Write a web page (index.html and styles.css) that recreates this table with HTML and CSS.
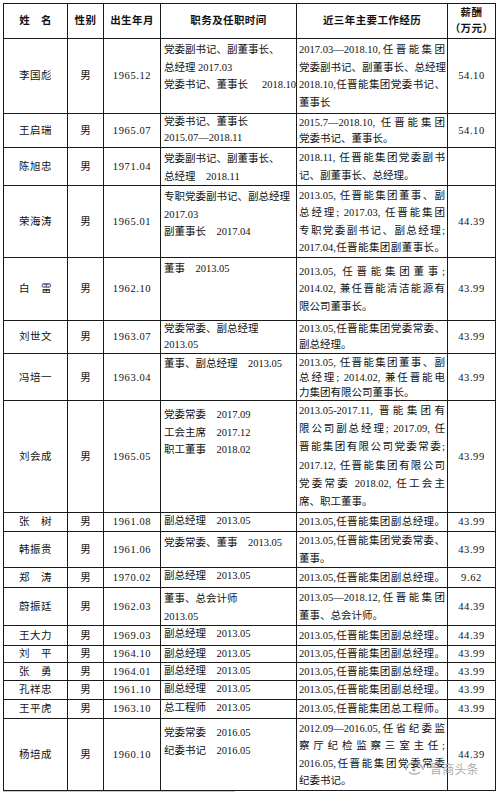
FILE: index.html
```html
<!DOCTYPE html>
<html lang="zh-CN">
<head>
<meta charset="utf-8">
<title>薪酬表</title>
<link rel="stylesheet" href="styles.css">
</head>
<body>
<div class="page">
<table class="t">
<colgroup><col class="c1"><col class="c2"><col class="c3"><col class="c4"><col class="c5"><col class="c6"></colgroup>
<thead>
<tr class="hh"><th>姓　名</th><th>性别</th><th>出生年月</th><th>职务及任职时间</th><th>近三年主要工作经历</th><th class="pay">薪酬<br>（万元）</th></tr>
</thead>
<tbody>
<tr class="h75"><td class="nm">李国彪</td><td class="sx">男</td><td class="bd">1965.12</td>
<td class="pos"><div>党委副书记、副董事长、</div><div>总经理 2017.03</div><div class="sb"><span>党委书记、董事长</span><span>2018.10</span></div></td>
<td class="exp"><div class="j">2017.03—2018.10,任晋能集团</div><div class="j">党委副书记、副董事长、总经理</div><div class="j">2018.10,任晋能集团党委书记、</div><div>董事长</div></td>
<td class="sal">54.10</td></tr>

<tr class="h34 lh16"><td class="nm">王启瑞</td><td class="sx">男</td><td class="bd">1965.07</td>
<td class="pos"><div>党委书记、董事长</div><div>2015.07—2018.11</div></td>
<td class="exp"><div class="j">2015.7—2018.10, 任晋能集团</div><div>党委书记、董事长。</div></td>
<td class="sal">54.10</td></tr>

<tr class="h36"><td class="nm">陈旭忠</td><td class="sx">男</td><td class="bd">1971.04</td>
<td class="pos"><div>党委副书记、副董事长、</div><div>总经理　2018.11</div></td>
<td class="exp"><div class="j">2018.11, 任晋能集团党委副书</div><div>记、副董事长、总经理。</div></td>
<td class="sal"></td></tr>

<tr class="h72"><td class="nm">荣海涛</td><td class="sx">男</td><td class="bd">1965.01</td>
<td class="pos"><div>专职党委副书记、副总经理</div><div>2017.03</div><div>副董事长　2017.04</div></td>
<td class="exp"><div class="j">2013.05, 任晋能集团董事、副</div><div class="j">总经理; 2017.03, 任晋能集团</div><div class="j">专职党委副书记、副总经理;</div><div class="j">2017.04,任晋能集团副董事长。</div></td>
<td class="sal">44.39</td></tr>

<tr class="h63"><td class="nm">白　雷</td><td class="sx">男</td><td class="bd">1962.10</td>
<td class="pos"><div>董事　2013.05</div></td>
<td class="exp"><div class="j">2013.05, 任晋能集团董事;</div><div class="j">2014.02, 兼任晋能清洁能源有</div><div>限公司董事长。</div></td>
<td class="sal">43.99</td></tr>

<tr class="h33 lh16"><td class="nm">刘世文</td><td class="sx">男</td><td class="bd">1963.07</td>
<td class="pos"><div>党委常委、副总经理</div><div>2013.05</div></td>
<td class="exp"><div class="j">2013.05,任晋能集团党委常委、</div><div>副总经理。</div></td>
<td class="sal">43.99</td></tr>

<tr class="h47 lh15"><td class="nm">冯培一</td><td class="sx">男</td><td class="bd">1963.04</td>
<td class="pos"><div>董事、副总经理　2013.05</div></td>
<td class="exp"><div class="j">2013.05, 任晋能集团董事、副</div><div class="j">总经理; 2014.02, 兼任晋能电</div><div>力集团有限公司董事长。</div></td>
<td class="sal">43.99</td></tr>

<tr class="h112"><td class="nm">刘会成</td><td class="sx">男</td><td class="bd">1965.05</td>
<td class="pos pt"><div>党委常委　2017.09</div><div>工会主席　2017.12</div><div>职工董事　2018.02</div></td>
<td class="exp six"><div class="j">2013.05-2017.11, 晋能集团有</div><div class="j">限公司副总经理; 2017.09, 任</div><div class="j">晋能集团有限公司党委常委;</div><div class="j">2017.12, 任晋能集团有限公司</div><div class="j">党委常委 2018.02, 任工会主</div><div>席、职工董事。</div></td>
<td class="sal">43.99</td></tr>

<tr class="h19 s"><td class="nm">张　树</td><td class="sx">男</td><td class="bd">1961.08</td>
<td class="pos"><div>副总经理　2013.05</div></td>
<td class="exp"><div class="j">2013.05,任晋能集团副总经理。</div></td>
<td class="sal">43.99</td></tr>

<tr class="h36"><td class="nm">韩振贵</td><td class="sx">男</td><td class="bd">1961.06</td>
<td class="pos"><div>党委常委、董事　2013.05</div></td>
<td class="exp"><div class="j">2013.05,任晋能集团党委常委、</div><div>董事。</div></td>
<td class="sal">43.99</td></tr>

<tr class="h20 s"><td class="nm">郑　涛</td><td class="sx">男</td><td class="bd">1970.02</td>
<td class="pos"><div>副总经理　2013.05</div></td>
<td class="exp"><div class="j">2013.05,任晋能集团副总经理。</div></td>
<td class="sal">9.62</td></tr>

<tr class="h36"><td class="nm">蔚振廷</td><td class="sx">男</td><td class="bd">1962.03</td>
<td class="pos"><div>董事、总会计师</div><div>2013.05</div></td>
<td class="exp"><div class="j">2013.05—2018.12,任晋能集团</div><div>董事、总会计师。</div></td>
<td class="sal">44.39</td></tr>

<tr class="h20 s"><td class="nm">王大力</td><td class="sx">男</td><td class="bd">1969.03</td>
<td class="pos"><div>副总经理　2013.05</div></td>
<td class="exp"><div class="j">2013.05,任晋能集团副总经理。</div></td>
<td class="sal">44.39</td></tr>

<tr class="h17 s"><td class="nm">刘　平</td><td class="sx">男</td><td class="bd">1964.10</td>
<td class="pos"><div>副总经理　2013.05</div></td>
<td class="exp"><div class="j">2013.05,任晋能集团副总经理。</div></td>
<td class="sal">43.99</td></tr>

<tr class="h18 s"><td class="nm">张　勇</td><td class="sx">男</td><td class="bd">1964.01</td>
<td class="pos"><div>副总经理　2013.05</div></td>
<td class="exp"><div class="j">2013.05,任晋能集团副总经理。</div></td>
<td class="sal">43.99</td></tr>

<tr class="h19 s"><td class="nm">孔祥忠</td><td class="sx">男</td><td class="bd">1961.10</td>
<td class="pos"><div>副总经理　2013.05</div></td>
<td class="exp"><div class="j">2013.05,任晋能集团副总经理。</div></td>
<td class="sal">43.99</td></tr>

<tr class="h19 s"><td class="nm">王平虎</td><td class="sx">男</td><td class="bd">1963.10</td>
<td class="pos"><div>总工程师　2013.05</div></td>
<td class="exp"><div class="j">2013.05,任晋能集团总工程师。</div></td>
<td class="sal">43.99</td></tr>

<tr class="h72"><td class="nm">杨培成</td><td class="sx">男</td><td class="bd">1960.10</td>
<td class="pos pt"><div>党委常委　2016.05</div><div>纪委书记　2016.05</div></td>
<td class="exp"><div class="j">2012.09—2016.05,任省纪委监</div><div class="j">察厅纪检监察三室主任;</div><div class="j">2016.05,任晋能集团党委常委</div><div>纪委书记。</div></td>
<td class="sal">44.39</td></tr>
</tbody>
</table>
<div class="foot"><span class="tick"></span></div>
<div class="wm">
<svg class="wm-icon" width="24" height="16" viewBox="0 0 24 16"><path d="M3 9 C3 4 7 2 11 2 C16 2 20 5 20 9" fill="none" stroke="#a8a8a8" stroke-width="1.6"/><path d="M6 11 C9 14 14 14 17 11" fill="none" stroke="#a8a8a8" stroke-width="1.6"/><circle cx="11" cy="9" r="1.6" fill="#a8a8a8"/></svg>
<span class="wm-text">晋商头条</span>
</div>
</div>
</body>
</html>
```

FILE: styles.css
```css
* { box-sizing: border-box; }
html, body { margin: 0; padding: 0; background: #fff; }
body {
  width: 497px;
  height: 792px;
  overflow: hidden;
  font-family: "Liberation Serif", "Noto Sans CJK SC", serif;
  color: #111;
}
.page {
  position: relative;
  padding: 3px 0 0 3px;
}
.t {
  border-collapse: collapse;
  table-layout: fixed;
  width: 492px;
  font-size: 10.5px;
  line-height: 17.5px;
}
.c1 { width: 64px; }
.c2 { width: 36px; }
.c3 { width: 57px; }
.c4 { width: 136px; }
.c5 { width: 151px; }
.c6 { width: 48px; }
.t th, .t td {
  border: 1px solid #1a1a1a;
  padding: 0;
  white-space: nowrap;
  overflow: hidden;
}
.t th {
  font-weight: bold;
  text-align: center;
  vertical-align: middle;
  letter-spacing: 0.4px;
}
.t th.pay { line-height: 16px; }
.nm, .sx, .bd, .sal {
  text-align: center;
  vertical-align: middle;
}
.nm { letter-spacing: 0.5px; }
.bd, .sal { letter-spacing: 0.6px; }
.pos {
  vertical-align: top;
  padding: 2px 0 0 3px !important;
  text-align: left;
}
.pos.pt { padding-top: 5px !important; }
.sb { display: flex; justify-content: space-between; }
.exp {
  vertical-align: middle;
  padding: 0 2px 0 2px !important;
  text-align: left;
}
.exp.six { line-height: 18.3px; }
.j {
  text-align: justify;
  text-align-last: justify;
}
.s td { line-height: 14px; }
.s .pos { padding-top: 1px !important; }
.lh16 td { line-height: 16px; }
.lh15 td { line-height: 15px; }
.lh16 .pos { padding-top: 0 !important; }
.hh { height: 35px; }
.h36 { height: 36px; }
.h75 { height: 75px; }
.h34 { height: 34px; }
.h72 { height: 72px; }
.h63 { height: 63px; }
.h33 { height: 33px; }
.h47 { height: 47px; }
.h112 { height: 112px; }
.h19 { height: 19px; }
.h20 { height: 20px; }
.h17 { height: 17px; }
.h18 { height: 18px; }
.foot {
  height: 4px;
  width: 232px;
  border-top: 1px solid #c8c8c8;
  position: relative;
}
.tick {
  display: block;
  margin-left: 229px;
  width: 3px;
  height: 4px;
  border-left: 1px solid #bdbdbd;
}
.wm {
  position: absolute;
  left: 403px;
  top: 761px;
  display: flex;
  align-items: center;
  gap: 3px;
  opacity: 0.9;
}
.wm-icon { display: block; }
.wm-text {
  font-family: "Noto Sans CJK SC", sans-serif;
  font-size: 12px;
  line-height: 16px;
  color: #a3a3a3;
  letter-spacing: 0.2px;
}
```
